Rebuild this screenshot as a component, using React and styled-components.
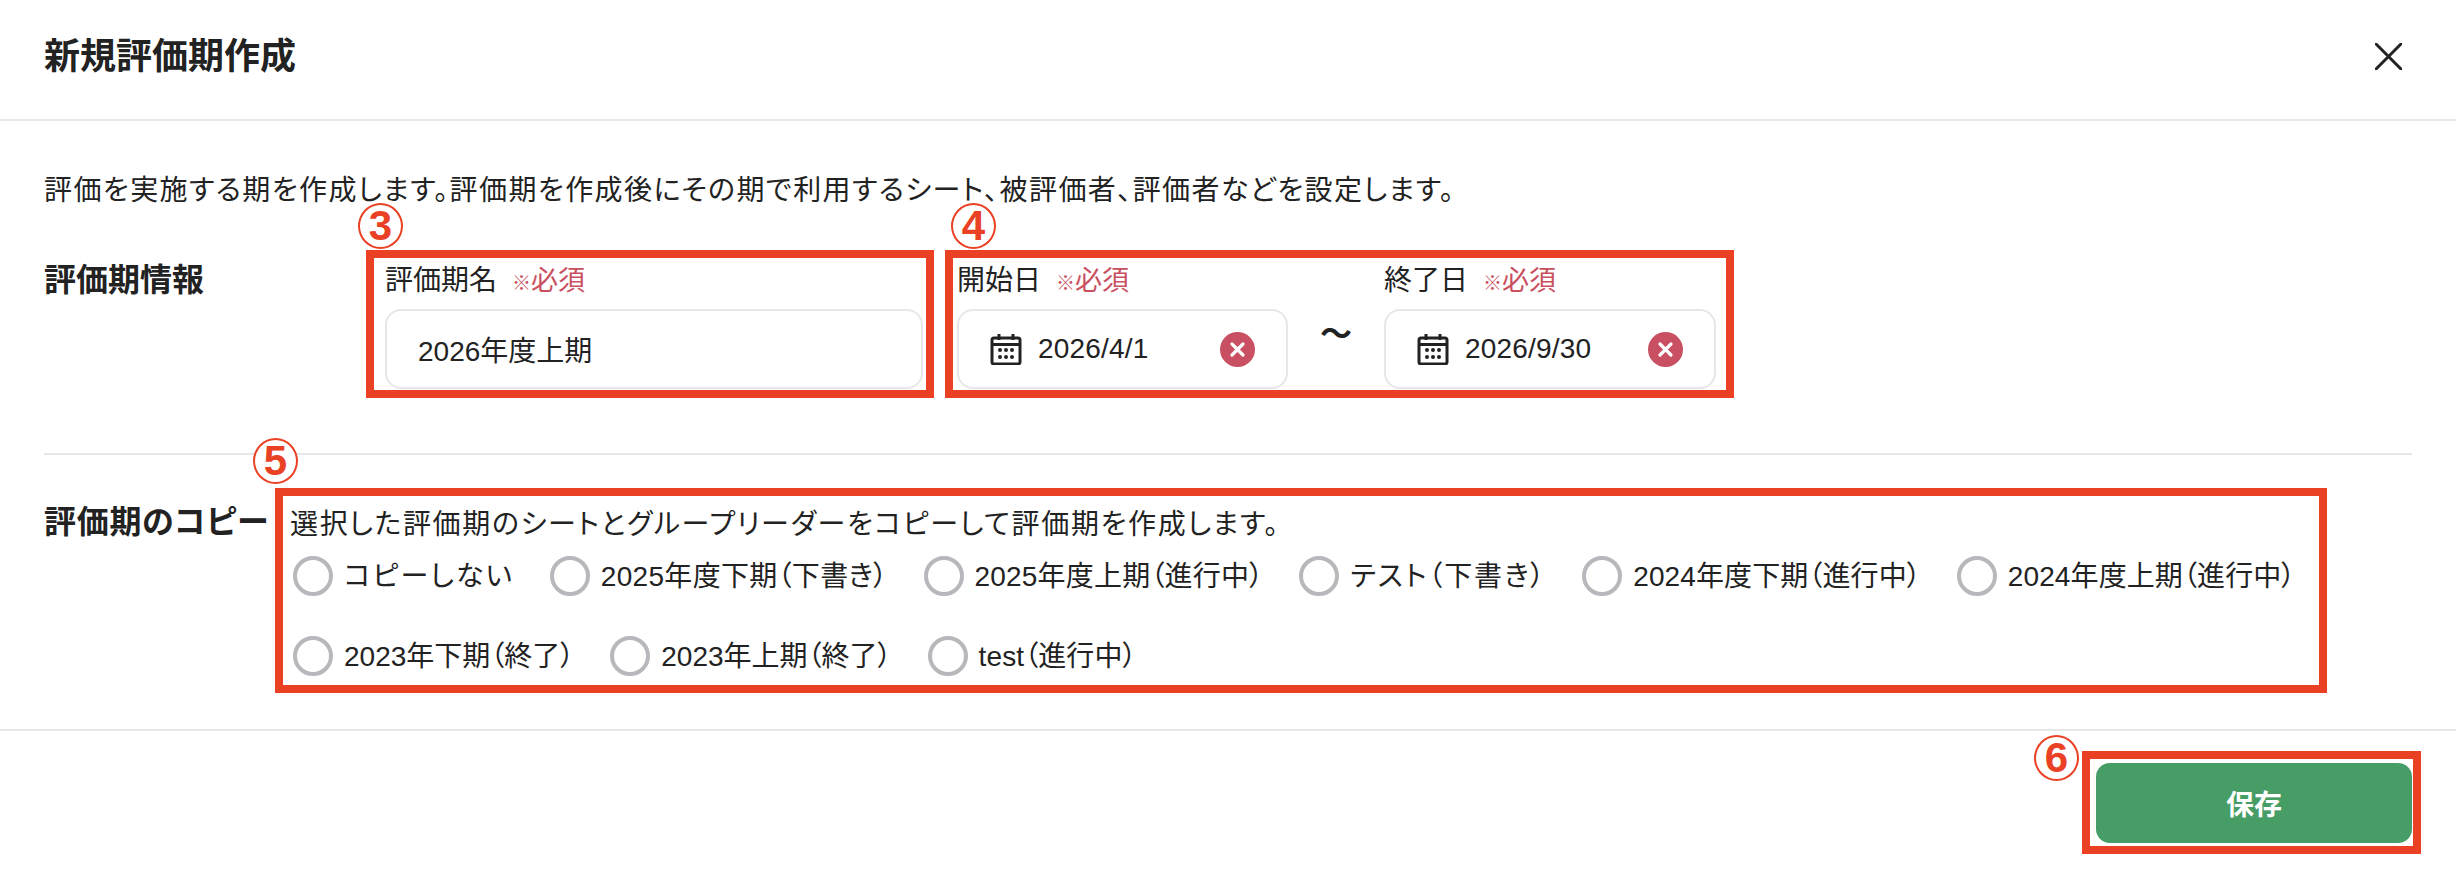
import React from "react";
import styled, { createGlobalStyle } from "styled-components";

const Global = createGlobalStyle`
  html, body { margin: 0; padding: 0; background: #fff; }
  body {
    font-family: "Liberation Sans", "Noto Sans CJK JP", sans-serif;
    font-feature-settings: "palt";
    color: #222;
  }
  * { box-sizing: border-box; }
`;

const Page = styled.div`
  width: 2456px;
  height: 872px;
  display: flex;
  flex-direction: column;
  overflow: hidden;
`;
const Header = styled.header`
  height: 121px;
  flex: none;
  padding: 0 54px 6px 44px;
  display: flex;
  align-items: center;
  justify-content: space-between;
  border-bottom: 2px solid #e6e6eb;
`;
const Title = styled.h1`
  margin: 0;
  font-size: 36px;
  line-height: 48px;
  font-weight: 700;
`;
const CloseIcon = styled.svg`
  width: 27px;
  height: 27px;
  display: block;
`;
const Body = styled.main`
  flex: none;
  height: 608px;
  padding: 50px 44px 0;
`;
const Lead = styled.p`
  margin: 0;
  font-size: 28px;
  line-height: 40px;
  height: 79px;
  letter-spacing: 1.43px;
`;
const Section = styled.section`
  display: flex;
  align-items: flex-start;
`;
const InfoSection = styled(Section)`
  height: 205px;
  border-bottom: 2px solid #e6e6eb;
`;
const CopySection = styled(Section)`
  padding-top: 33px;
`;
const SectionLabel = styled.h2`
  margin: 0;
  flex: none;
  width: ${(p) => p.$width}px;
  font-size: 32px;
  line-height: 40px;
  font-weight: 700;
  padding-top: ${(p) => p.$top}px;
  letter-spacing: ${(p) => p.$spacing || 0}px;
`;
const Marked = styled.div`
  position: relative;
  flex: none;
  border: 8px solid #ea4024;
`;
const NameBox = styled(Marked)`
  width: 568px;
  height: 148px;
  margin-left: -1px;
  margin-right: 11px;
  padding: 0 3px 0 11px;
`;
const PeriodBox = styled(Marked)`
  width: 789px;
  height: 148px;
  padding: 0 10px 0 4px;
  display: flex;
`;
const Badge = styled.span`
  position: absolute;
  left: ${(p) => p.$left}px;
  top: ${(p) => p.$top}px;
  width: 45px;
  height: 46px;
  border-radius: 50%;
  border: 2px solid #ea4024;
  color: #ea4024;
  font-size: 42px;
  font-weight: 700;
  line-height: 42px;
  text-align: center;
  background: #fff;
`;
const FieldLabel = styled.div`
  height: 51px;
  padding-top: 3px;
  font-size: 28px;
  line-height: 40px;
  display: flex;
  gap: 15px;
`;
const Required = styled.span`
  color: #c9505f;
  font-size: 27px;
`;
const RequiredMark = styled.span`
  font-size: 19px;
`;
const TextInput = styled.div`
  height: 80px;
  border: 2px solid #e6e6eb;
  border-radius: 16px;
  padding: 0 31px;
  display: flex;
  align-items: center;
  font-size: 28px;
`;
const DateField = styled.div`
  width: ${(p) => p.$width}px;
  flex: none;
`;
const DateInput = styled.div`
  height: 80px;
  border: 2px solid #e6e6eb;
  border-radius: 16px;
  padding: 0 31px;
  display: flex;
  align-items: center;
  gap: 16px;
  font-size: 28px;
`;
const DateValue = styled.span`
  flex: 1;
  letter-spacing: 0.2px;
`;
const Wave = styled.div`
  width: 96px;
  flex: none;
  padding-top: 56px;
  text-align: center;
  font-size: 32px;
  line-height: 40px;
  font-weight: 700;
`;
const ClearIcon = styled.svg`
  width: 35px;
  height: 35px;
  flex: none;
  display: block;
`;
const CalendarIcon = styled.svg`
  width: 32px;
  height: 32px;
  flex: none;
  display: block;
`;
const CopyBox = styled(Marked)`
  width: 2052px;
  height: 205px;
  padding: 9px 0 0 7px;
`;
const CopyLead = styled.p`
  margin: 0;
  height: 51px;
  font-size: 28px;
  line-height: 40px;
  letter-spacing: 1.65px;
`;
const RadioGroup = styled.div`
  display: flex;
  flex-wrap: wrap;
  padding-left: 3px;
  column-gap: 36px;
`;
const RadioItem = styled.label`
  display: flex;
  align-items: flex-start;
  gap: 11px;
  height: 80px;
  font-size: 28px;
  line-height: 42px;
  letter-spacing: ${(p) => p.$spacing}px;
`;
const RadioMark = styled.span`
  width: 40px;
  height: 40px;
  flex: none;
  border-radius: 50%;
  border: 4px solid #b8b8bc;
`;
const Footer = styled.footer`
  flex: 1;
  border-top: 2px solid #e6e6eb;
  padding: 20px 35px 0 0;
  display: flex;
  justify-content: flex-end;
  align-items: flex-start;
`;
const SaveBox = styled(Marked)`
  width: 339px;
  height: 103px;
  padding: 4px 1px 0 6px;
`;
const SaveButton = styled.button`
  width: 316px;
  height: 80px;
  border: 0;
  border-radius: 14px;
  background: #479d66;
  color: #fff;
  font: 700 28px "Liberation Sans", "Noto Sans CJK JP", sans-serif;
  font-feature-settings: "palt";
`;

const Calendar = () => (
  <CalendarIcon viewBox="0 0 32 32" fill="none" aria-hidden="true">
    <rect x="2" y="5" width="28" height="26" rx="2" stroke="#222" strokeWidth="3" />
    <path d="M2 11.5H30M9 1V7M23 1V7" stroke="#222" strokeWidth="3" />
    <g fill="#222">
      {[10, 16, 22].map((x) =>
        [17, 24].map((y) => <circle key={`${x}-${y}`} cx={x} cy={y} r="2" />)
      )}
    </g>
  </CalendarIcon>
);
const Clear = () => (
  <ClearIcon viewBox="0 0 35 35" aria-hidden="true">
    <circle cx="17.5" cy="17.5" r="17.5" fill="#c95062" />
    <path d="M12 12L23 23M23 12L12 23" stroke="#fff" strokeWidth="3.2" strokeLinecap="round" />
  </ClearIcon>
);
const RequiredNote = () => (
  <Required>
    <RequiredMark>※</RequiredMark>必須
  </Required>
);
const DateBlock = ({ label, value, width }) => (
  <DateField $width={width}>
    <FieldLabel>
      {label}
      <RequiredNote />
    </FieldLabel>
    <DateInput>
      <Calendar />
      <DateValue>{value}</DateValue>
      <Clear />
    </DateInput>
  </DateField>
);

const options = [
  { text: "コピーしない", spacing: 2 },
  { text: "2025年度下期（下書き）", spacing: 0.3 },
  { text: "2025年度上期（進行中）", spacing: 0.2 },
  { text: "テスト（下書き）", spacing: 1.9 },
  { text: "2024年度下期（進行中）", spacing: 0.1 },
  { text: "2024年度上期（進行中）", spacing: 0.1 },
  { text: "2023年下期（終了）", spacing: 0 },
  { text: "2023年上期（終了）", spacing: 0 },
  { text: "test（進行中）", spacing: 0.1 },
];

export default function App() {
  return (
    <Page>
      <Global />
      <Header>
        <Title>新規評価期作成</Title>
        <CloseIcon viewBox="0 0 27 27" fill="none" aria-label="閉じる">
          <path d="M1 1L26 26M26 1L1 26" stroke="#222" strokeWidth="3" strokeLinecap="round" />
        </CloseIcon>
      </Header>
      <Body>
        <Lead>評価を実施する期を作成します。評価期を作成後にその期で利用するシート、被評価者、評価者などを設定します。</Lead>
        <InfoSection>
          <SectionLabel $width={323} $top={10}>評価期情報</SectionLabel>
          <NameBox>
            <Badge $left={-16} $top={-55}>3</Badge>
            <FieldLabel>
              評価期名
              <RequiredNote />
            </FieldLabel>
            <TextInput>2026年度上期</TextInput>
          </NameBox>
          <PeriodBox>
            <Badge $left={-2} $top={-55}>4</Badge>
            <DateBlock label="開始日" value="2026/4/1" width={331} />
            <Wave>〜</Wave>
            <DateBlock label="終了日" value="2026/9/30" width={332} />
          </PeriodBox>
        </InfoSection>
        <CopySection>
          <SectionLabel $width={231} $top={14} $spacing={0.7}>評価期のコピー</SectionLabel>
          <CopyBox>
            <Badge $left={-30} $top={-58}>5</Badge>
            <CopyLead>選択した評価期のシートとグループリーダーをコピーして評価期を作成します。</CopyLead>
            <RadioGroup>
              {options.map((o) => (
                <RadioItem key={o.text} $spacing={o.spacing}>
                  <RadioMark />
                  {o.text}
                </RadioItem>
              ))}
            </RadioGroup>
          </CopyBox>
        </CopySection>
      </Body>
      <Footer>
        <SaveBox>
          <Badge $left={-56} $top={-24}>6</Badge>
          <SaveButton>保存</SaveButton>
        </SaveBox>
      </Footer>
    </Page>
  );
}
